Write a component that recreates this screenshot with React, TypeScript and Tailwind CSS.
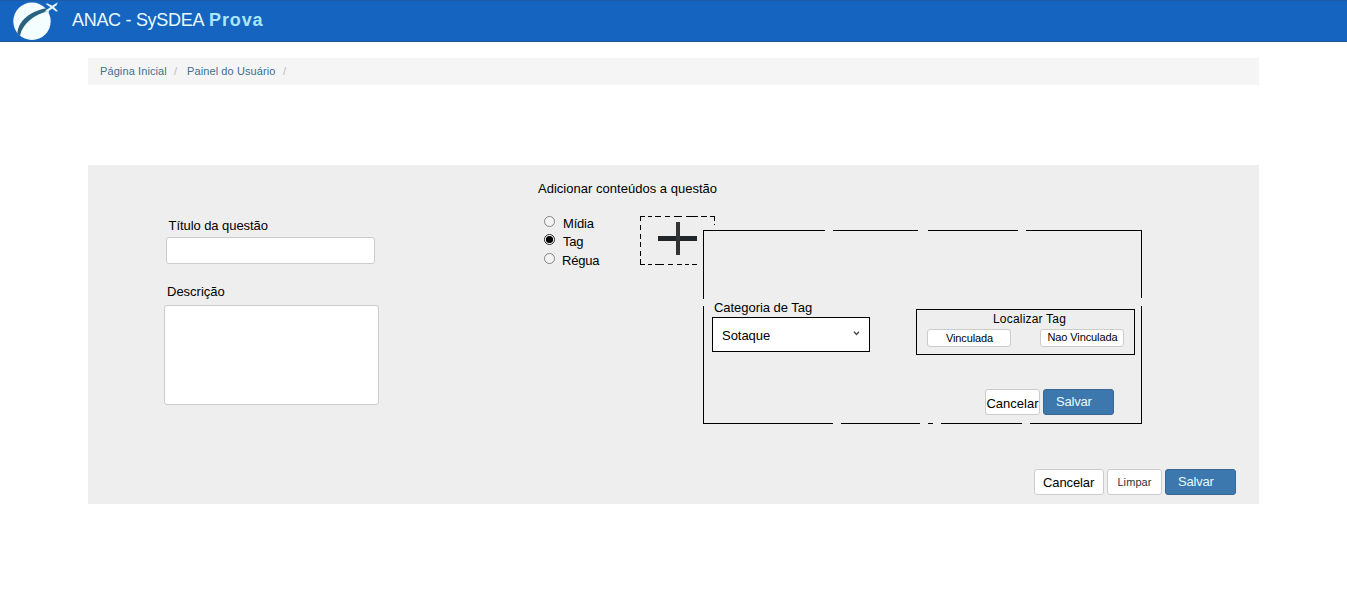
import React from "react";

const radios = [
  { label: "Mídia", checked: false, row: "h-[18px]", text: "pl-[8px] leading-[15px]" },
  { label: "Tag", checked: true, row: "h-[19px]", text: "pl-[8px] leading-[15px]" },
  { label: "Régua", checked: false, row: "h-[18px]", text: "pl-[7px] leading-[15px]" },
];

function Logo() {
  return (
    <svg width="48" height="42" viewBox="0 0 48 42" className="block">
      <ellipse cx="20" cy="21.300" rx="18.700" ry="18.700" fill="#f4fdff" />
      <path d="M5.500 34C5.500 24 14 12 35.500 8L37 11C22 14.500 11 23 8 35.500Z" fill="#2a6080" />
      <path d="M32.500 11.600L42 4.500L45.800 2.300L44.500 5.200L35.500 12Z" fill="#e0f5fc" />
      <path d="M33.500 3.800L35.500 3.500L41 6L46 11.200L44 11.500L38.800 7.500ZM34 9L36.500 10.500L37.300 13.300L35.500 11.500Z" fill="#e0f5fc" />
    </svg>
  );
}

function Radio({ checked }: { checked: boolean }) {
  return (
    <svg width="11" height="12" viewBox="0 0 11 12" className="block shrink-0">
      <circle cx="5.500" cy="5.500" r="5" fill={checked ? "#fff" : "#f3f3f3"} stroke={checked ? "#111" : "#777"} strokeWidth="0.900" />
      {checked && <circle cx="5.500" cy="5.500" r="3.600" fill="#000" />}
    </svg>
  );
}

function AddBox() {
  return (
    <svg width="75" height="50" viewBox="0 0 75 50" className="block">
      <g stroke="#000" strokeWidth="1" fill="none">
        <path d="M0 .5H5M8 .5H12M15 .5H21M25 .5H30M34 .5H42M46 .5H58M61 .5H67M70 .5H75" />
        <path d="M.5 0V5M.5 9V14M.5 18V23M.5 26V31M.5 35V40M.5 43V49" />
        <path d="M0 48.500H5M8 48.500H12M15 48.500H24M28 48.500H33M37 48.500H42M45 48.500H49M52 48.500H57" />
        <path d="M74.500 0V5M74.500 8V9" />
      </g>
      <path d="M18 20H57V25H18Z" fill="#202629" />
      <path d="M36 6H40V39H36Z" fill="#303436" />
    </svg>
  );
}

function Frame() {
  return (
    <svg width="439" height="194" viewBox="0 0 439 194" className="pointer-events-none absolute inset-0">
      <path
        d="M0 .5H122M130 .5H215M225 .5H315M323 .5H439M438.500 0V68M438.500 76V194M0 193.500H130M138 193.500H217M225 193.500H230M238 193.500H319M327 193.500H439M.5 0V69M.5 76V194"
        stroke="#000"
        fill="none"
      />
    </svg>
  );
}

function TagDialog() {
  return (
    <div className="absolute top-[65px] left-[615px] h-[194px] w-[439px] bg-[#eee]">
      <Frame />
      <div className="flex justify-between pt-[70px] pr-[7px] pl-[9px]">
        <div className="w-[158px]">
          <div className="-mt-px mb-px pl-0.5 text-[13px] leading-[17px] tracking-[-0.04px]">Categoria de Tag</div>
          <div className="flex h-[35px] items-center justify-between border border-black bg-white pr-[9px] pl-[9px] text-[13px]">
            <span className="pt-[3px] tracking-[-0.03px]">Sotaque</span>
            <svg width="7" height="5" viewBox="0 0 7 5" className="mb-[3px]">
              <path d="M1 .8L3.500 3.500L6 .8" stroke="#444" strokeWidth="1.300" fill="none" />
            </svg>
          </div>
        </div>
        <div className="mt-[9px] h-[46px] w-[219px] border border-black">
          <div className="h-[19px] pl-2 text-center text-[12px] leading-[18px] tracking-[0.2px]">Localizar Tag</div>
          <div className="flex justify-between px-[10px]">
            <button className="h-[18px] w-[84px] rounded-[3px] border border-[#ccc] bg-white pl-px text-[11px] leading-[17px] tracking-[-0.1px]">Vinculada</button>
            <button className="h-[18px] w-[84px] rounded-[3px] border border-[#ccc] bg-white pl-px text-[11px] leading-[14px] tracking-[-0.1px] whitespace-nowrap">
              <span className="block -translate-y-px">Nao Vinculada</span>
            </button>
          </div>
        </div>
      </div>
      <div className="mt-[34px] flex justify-end gap-[3px] pr-[28px]">
        <button className="flex h-[26px] w-[55px] items-center justify-center rounded-[3px] border border-[#ccc] bg-white pt-1 text-[13px] whitespace-nowrap">Cancelar</button>
        <SaveButton />
      </div>
    </div>
  );
}

function SaveButton() {
  return (
    <button className="flex h-[26px] w-[71px] items-center rounded-[3px] border border-[#38678f] bg-[#3c78ad] pl-3 text-[13px] tracking-[-0.2px] text-[#e6faff]">
      Salvar
    </button>
  );
}

export default function App() {
  return (
    <div className="min-h-[589px] w-full bg-white font-['Liberation_Sans',Arial,sans-serif] text-black">
      <header className="flex h-[42px] border-t border-b border-t-[#1c5ba5] border-b-[#20558f] bg-[#1565c0] pl-3">
        <div className="-mt-px w-[60px]">
          <Logo />
        </div>
        <h1 className="flex text-[18px] leading-[38px] whitespace-nowrap text-[#e9faff]">
          <span className="w-[137px] tracking-[-0.3px]">ANAC - SySDEA</span>
          <b className="tracking-[0.9px] text-[#aae6fb]">Prova</b>
        </h1>
      </header>

      <nav className="mt-4 ml-[88px] flex h-[27px] w-[1171px] items-center bg-[#f5f5f5] pl-3 text-[11px] text-[#41708f]">
        <span className="w-[67px] tracking-[0.1px]">Página Inicial</span>
        <span className="w-5 pl-[7px] text-[#bbb]">/</span>
        <span className="w-[89px] tracking-[0.1px]">Painel do Usuário</span>
        <span className="pl-[7px] text-[#bbb]">/</span>
      </nav>

      <main className="relative mt-[80px] ml-[88px] flex h-[339px] w-[1171px] flex-col bg-[#eee] text-[13px]">
        <div className="flex h-[304px]">
          <section className="w-[450px] pt-[52px] pl-[76px]">
            <label className="block h-5 pl-[4.500px] leading-[17px] tracking-[-0.06px]">Título da questão</label>
            <input className="ml-[2px] block h-[27px] w-[209px] rounded-[3px] border border-[#ccc] bg-white outline-none" />
            <label className="mt-[19px] block h-[22px] pl-[3px] leading-[17px]">Descrição</label>
            <textarea className="block h-[100px] w-[215px] resize-none rounded-[3px] border border-[#ccc] bg-white outline-none" />
          </section>
          <section className="pt-[15px]">
            <p className="leading-[17px] tracking-[0.02px]">Adicionar conteúdos a questão</p>
            <div className="mt-[19px] flex">
              <div className="w-[102px] pl-[6px]">
                {radios.map((r) => (
                  <div key={r.label} className={`flex ${r.row}`}>
                    <Radio checked={r.checked} />
                    <span className={`tracking-[-0.2px] ${r.text}`}>{r.label}</span>
                  </div>
                ))}
              </div>
              <AddBox />
            </div>
          </section>
        </div>
        <div className="flex justify-end gap-[3px] pr-[23px]">
          <button className="flex h-[26px] w-[70px] items-center rounded-[3px] border border-[#ccc] bg-white pt-0.5 pl-2 tracking-[-0.1px]">Cancelar</button>
          <button className="h-[26px] w-[55px] rounded-[3px] border border-[#ccc] bg-white text-[11px] tracking-[0.1px] text-[#333]">Limpar</button>
          <SaveButton />
        </div>
        <TagDialog />
      </main>
    </div>
  );
}
